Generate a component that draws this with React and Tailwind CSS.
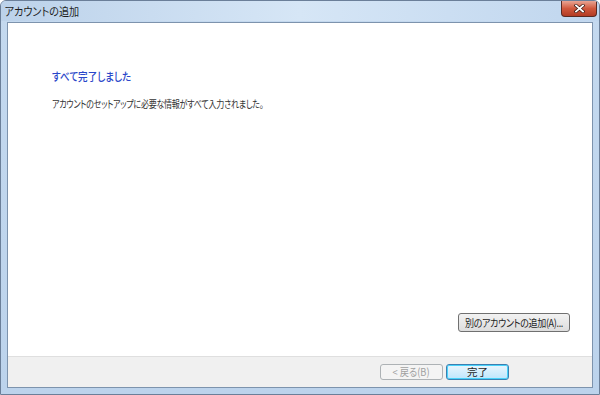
import React from "react";

const font = { fontFamily: '"Noto Sans CJK JP", "Noto Sans", sans-serif' };

const App = () => {
  return (
    <div
      className="w-[600px] h-[395px] flex flex-col bg-gradient-to-b from-[#c4d9ef] to-[#bcd3ec] border border-[#6b7f99] rounded-t-[6px] overflow-hidden [font-feature-settings:'palt']"
      style={font}
    >
      {/* Title bar */}
      <div className="h-[20px] flex items-start justify-between bg-gradient-to-r from-[#bcd2ea] via-[#d6e6f6] to-[#c0d6ee] shrink-0">
        <span className="pl-[4px] pt-[2px] text-[11.5px] leading-[16px] text-[#1e1e1e] inline-block origin-left scale-x-[0.88] whitespace-nowrap">
          アカウントの追加
        </span>
        <button className="mr-[2px] w-[36px] h-[16px] rounded-b-[4px] border border-[#5a2a22] border-t-0 bg-gradient-to-b from-[#e8a493] via-[#d0583d] to-[#b23b24] flex items-center justify-center">
          <svg width="11" height="9" viewBox="0 0 11 9">
            <path
              d="M2 1.5 L9 7.5 M9 1.5 L2 7.5"
              stroke="#3c1a14"
              strokeWidth="3.2"
              strokeLinecap="square"
            />
            <path
              d="M2 1.5 L9 7.5 M9 1.5 L2 7.5"
              stroke="#ffffff"
              strokeWidth="1.8"
              strokeLinecap="square"
            />
          </svg>
        </button>
      </div>

      {/* Client area */}
      <div className="flex-1 mx-[6px] mt-[1px] mb-[6px] border border-[#7d93ad] flex flex-col bg-white">
        <div className="flex-1 flex flex-col items-start pl-[44px] pr-[22px]">
          <div className="mt-[45px] text-[11.5px] leading-[16px] font-medium text-[#2a47c9] inline-block origin-left scale-x-[0.83] whitespace-nowrap">
            すべて完了しました
          </div>
          <div className="mt-[12px] text-[10.5px] leading-[16px] tracking-[-0.4px] text-[#333333] inline-block origin-left scale-x-[0.77] whitespace-nowrap">
            アカウントのセットアップに必要な情報がすべて入力されました。
          </div>
          <div className="flex-1" />
          <div className="self-stretch flex justify-end mb-[24px]">
            <button className="w-[112px] h-[19px] border border-[#707070] rounded-[3px] bg-gradient-to-b from-[#f2f2f2] to-[#dddddd] flex items-center justify-center overflow-hidden">
              <span className="text-[10.5px] leading-[16px] tracking-[-0.4px] whitespace-nowrap text-[#1e1e1e] inline-block scale-x-[0.86]">
                別のアカウントの追加(A)...
              </span>
            </button>
          </div>
        </div>
        <div className="h-[31px] border-t border-[#dfdfdf] bg-[#f0f0f0] flex items-center justify-end gap-[3px] pr-[83px] shrink-0">
          <button className="w-[63px] h-[16px] border border-[#adb2b5] rounded-[3px] bg-[#f4f4f4] flex items-center justify-center">
            <span className="text-[10.5px] leading-[14px] whitespace-nowrap text-[#a0a0a0] inline-block scale-x-[0.88]">
              &lt; 戻る(B)
            </span>
          </button>
          <button className="w-[63px] h-[16px] border border-[#3c7fb1] rounded-[3px] bg-gradient-to-b from-[#eaf6fd] to-[#bee6fd] text-[10.5px] leading-[14px] text-[#1e1e1e] shadow-[inset_0_0_0_1px_#48d2fa]">
            完了
          </button>
        </div>
      </div>
    </div>
  );
};

export default App;
